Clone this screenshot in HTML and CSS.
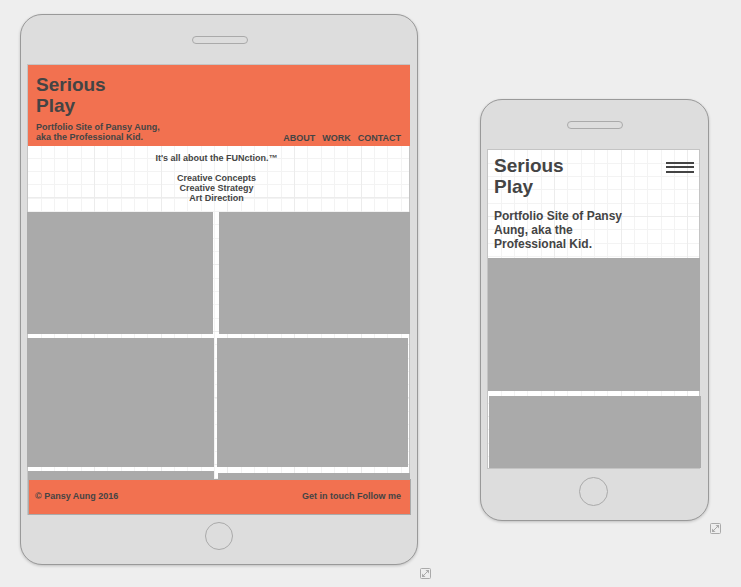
FILE: index.html
```html
<!DOCTYPE html>
<html lang="en">
<head>
<meta charset="utf-8">
<title>Serious Play</title>
<link rel="stylesheet" href="styles.css">
</head>
<body>
<main class="stage">
  <section class="device">
    <div class="frame frame-tablet">
      <div class="speaker"></div>
      <div class="screen">
        <header class="site-header">
          <div class="brand">
            <h1 class="title">Serious<br>Play</h1>
            <p class="tagline">Portfolio Site of Pansy Aung,<br>aka the Professional Kid.</p>
          </div>
          <nav class="nav">
            <a href="#about">ABOUT</a>
            <a href="#work">WORK</a>
            <a href="#contact">CONTACT</a>
          </nav>
        </header>
        <div class="intro">
          <p>It's all about the FUNction.™</p>
          <p>Creative Concepts<br>Creative Strategy<br>Art Direction</p>
        </div>
        <div class="gallery">
          <div class="row row-first"><div class="tile"></div><div class="tile"></div></div>
          <div class="row row-second"><div class="tile"></div><div class="tile"></div></div>
          <div class="row row-third"><div class="tile"></div><div class="tile tile-late"></div></div>
        </div>
        <footer class="site-footer">
          <span>© Pansy Aung 2016</span>
          <span><a href="#touch">Get in touch</a> <a href="#follow">Follow me</a></span>
        </footer>
      </div>
      <div class="home"></div>
    </div>
    <button class="expand" type="button" aria-label="Expand tablet">
      <svg width="11" height="11" viewBox="0 0 11 11"><rect x=".5" y=".5" width="10" height="10" rx="1"/><path d="M3 8L8 3"/><path class="solid" d="M5.500 2H9v3.500zM2 5.500V9h3.500z"/></svg>
    </button>
  </section>

  <section class="device device-phone">
    <div class="frame frame-phone">
      <div class="speaker"></div>
      <div class="screen">
        <header class="phone-header">
          <div>
            <h2 class="title">Serious<br>Play</h2>
            <p class="phone-tagline">Portfolio Site of Pansy<br>Aung, aka the<br>Professional Kid.</p>
          </div>
          <button class="menu" type="button" aria-label="Menu">
            <svg width="28" height="11" viewBox="0 0 28 11"><path d="M0 0h28v2H0zM0 4h28v2H0zM0 9h28v2H0z"/></svg>
          </button>
        </header>
        <div class="phone-gallery">
          <div class="tile tile-top"></div>
          <div class="tile tile-bottom"></div>
        </div>
      </div>
      <div class="home"></div>
    </div>
    <button class="expand" type="button" aria-label="Expand phone">
      <svg width="11" height="11" viewBox="0 0 11 11"><rect x=".5" y=".5" width="10" height="10" rx="1"/><path d="M3 8L8 3"/><path class="solid" d="M5.500 2H9v3.500zM2 5.500V9h3.500z"/></svg>
    </button>
  </section>
</main>
</body>
</html>
```
FILE: styles.css
```css
* {
  box-sizing: border-box;
}

body {
  margin: 0;
  background: #eee;
  color: #444;
  font: bold 9px/10px "Liberation Sans", Arial, sans-serif;
}

h1, h2, p {
  margin: 0;
}

a {
  color: inherit;
  text-decoration: none;
}

button {
  padding: 0;
  border: 0;
  background: none;
}

svg {
  display: block;
}

.stage {
  display: grid;
  grid-template-columns: 398fr 229fr;
  column-gap: 62px;
  align-items: start;
  padding: 14px 32px 0 20px;
}

.device {
  display: flex;
  flex-direction: column;
}

.device-phone {
  margin-top: 85px;
}

.frame {
  display: flex;
  flex-direction: column;
  align-items: center;
  padding: 21px 7px 14px 6px;
  border: 1px solid #999;
  border-radius: 22px;
  background: #ddd;
  box-shadow: 0 1px 3px rgba(0, 0, 0, 0.2);
}

.frame-phone {
  padding-right: 8px;
}

.speaker {
  width: 56px;
  height: 8px;
  margin-left: 3px;
  border: 1px solid #aaa;
  border-radius: 4px;
}

.home {
  width: 28px;
  height: 28px;
  margin-top: 7px;
  border: 1px solid #aaa;
  border-radius: 50%;
}

.frame-phone .home {
  width: 29px;
  height: 29px;
  margin-top: 8px;
}

/* Graph paper: light lines three to 40px, heavier lines three to 200px */
.screen {
  align-self: stretch;
  margin-top: 20px;
  border: 1px solid #c4c4c4;
  background-color: #fff;
  background-image:
    linear-gradient(90deg, transparent 66px, #ececec 66px 67px, transparent 67px 133px, #ececec 133px 134px, transparent 134px 199px, #ececec 199px),
    linear-gradient(transparent 66px, #ececec 66px 67px, transparent 67px 132px, #ececec 132px 133px, transparent 133px 199px, #ececec 199px),
    linear-gradient(90deg, transparent 13px, #f3f3f3 13px 14px, transparent 14px 26px, #f3f3f3 26px 27px, transparent 27px 39px, #f3f3f3 39px),
    linear-gradient(transparent 13px, #f3f3f3 13px 14px, transparent 14px 26px, #f3f3f3 26px 27px, transparent 27px 39px, #f3f3f3 39px);
  background-size: 200px 200px, 200px 200px, 40px 40px, 40px 40px;
}

.title {
  font-size: 19px;
  line-height: 21px;
}

.site-header {
  display: flex;
  justify-content: space-between;
  align-items: flex-end;
  margin-right: -1px;
  padding: 9px 9px 3px 8px;
  background: #f27150;
}

.brand {
  padding-bottom: 1px;
}

.tagline {
  margin-top: 6px;
}

.nav {
  display: flex;
  gap: 7px;
}

.intro {
  display: grid;
  gap: 10px;
  padding: 7px 4px 9px 0;
  text-align: center;
}

.gallery {
  display: grid;
  gap: 4px;
}

.row {
  display: grid;
}

.row-first {
  grid-template-columns: 186fr 191fr;
  column-gap: 6px;
  height: 122px;
  margin: 0 -1px;
}

.row-second {
  grid-template-columns: 187fr 191fr;
  column-gap: 3px;
  height: 129px;
  margin: 0 1px 0 -1px;
}

.row-third {
  grid-template-columns: 186fr 192fr;
  column-gap: 4px;
  height: 8px;
  margin-right: -1px;
}

.tile {
  background: #aaa;
}

.tile-late {
  margin-top: 2px;
}

.site-footer {
  display: flex;
  justify-content: space-between;
  margin: 0 -2px -1px 0;
  padding: 11px 9px 13px 6px;
  border: 1px solid #aaa;
  background: #f27150;
}

.phone-header {
  display: flex;
  justify-content: space-between;
  align-items: flex-start;
  padding: 5px 5px 7px 6px;
}

.phone-tagline {
  margin-top: 12px;
  font-size: 12px;
  line-height: 14px;
}

.menu {
  margin-top: 7px;
  fill: #444;
}

.phone-gallery {
  display: grid;
  gap: 5px;
}

.tile-top {
  height: 133px;
  margin-right: -1px;
}

.tile-bottom {
  height: 72px;
  margin: 0 -2px 0 1px;
}

.expand {
  align-self: flex-end;
  margin: 3px -13px 0 0;
  fill: none;
  stroke: #aaa;
}

.device-phone .expand {
  margin: 2px -12px 0 0;
}

.expand .solid {
  fill: #aaa;
  stroke: none;
}
```
